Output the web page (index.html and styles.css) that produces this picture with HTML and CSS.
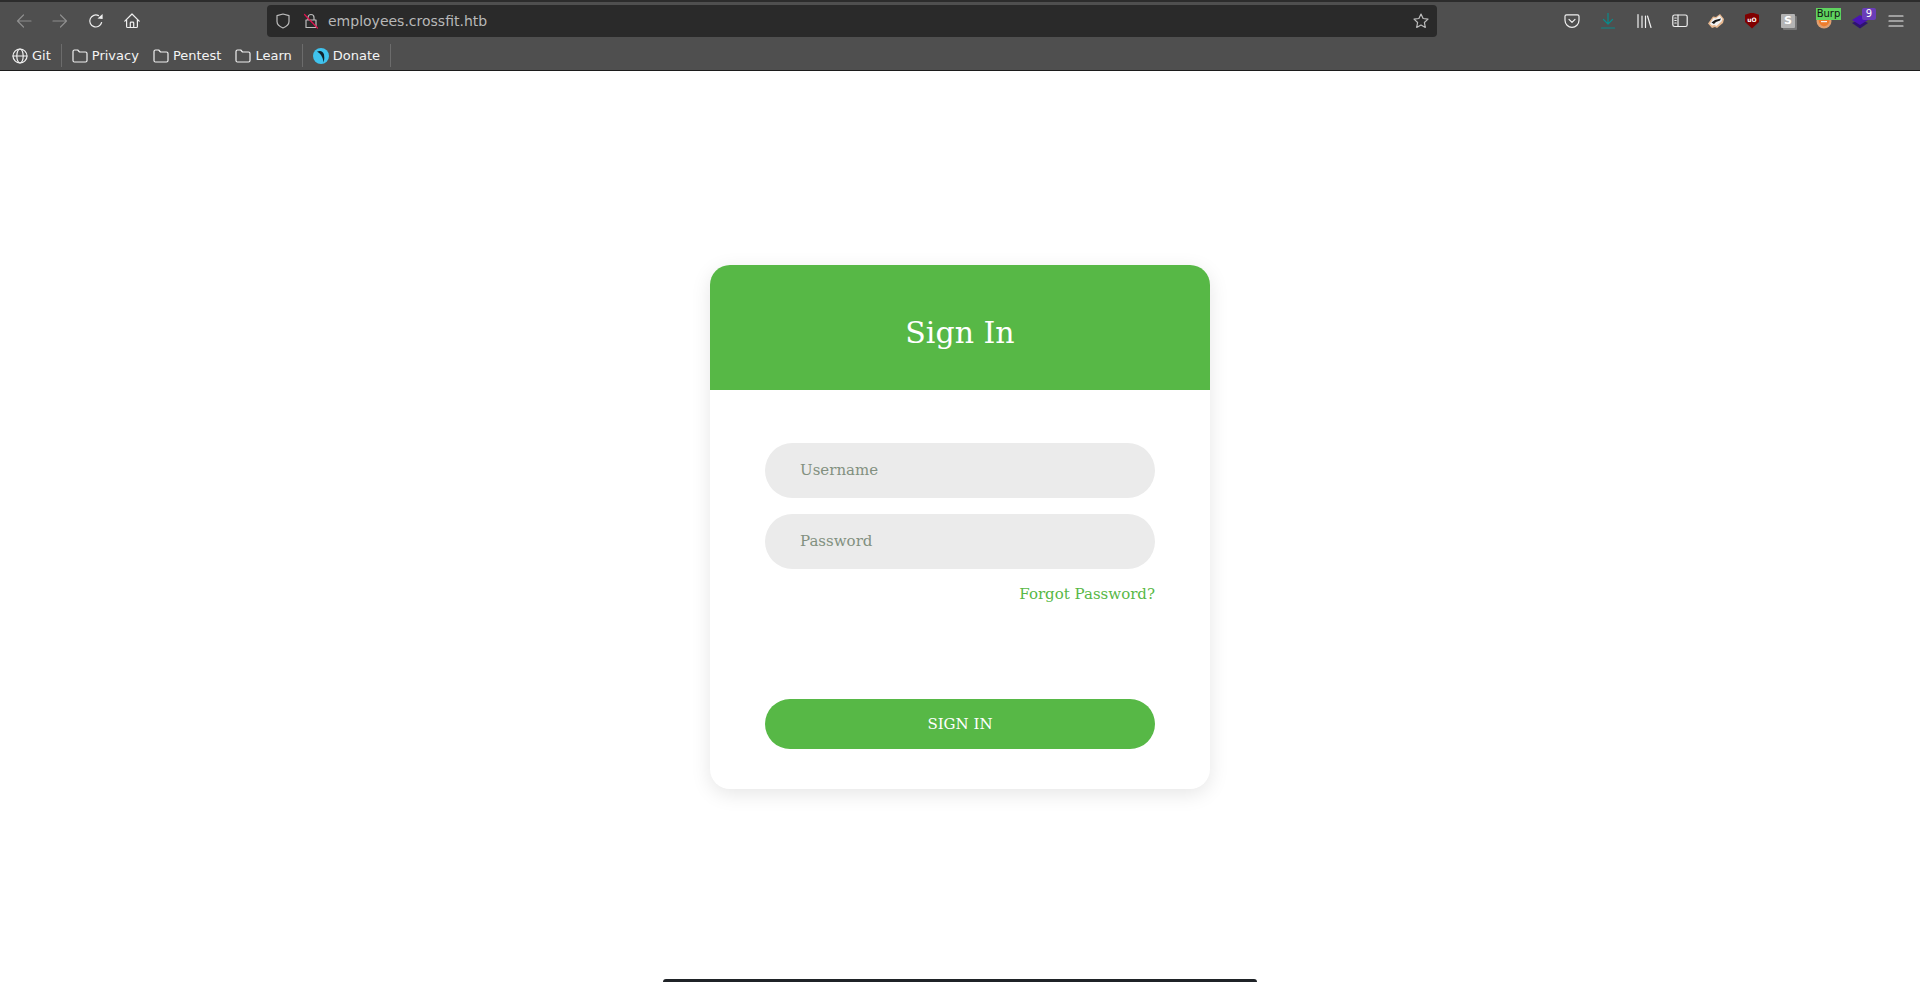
FILE: index.html
```html
<!DOCTYPE html>
<html lang="en">
<head>
    <meta charset="UTF-8">
    <title>employees.crossfit.htb</title>
    <link rel="stylesheet" href="styles.css">
</head>
<body>
    <header class="browser">
        <div class="nav-bar">
            <div class="tool-group">
                <span class="tool"><svg class="icon dim" viewBox="0 0 16 16"><path d="M15 8H1.500M7.500 2 1.500 8l6 6"/></svg></span>
                <span class="tool"><svg class="icon dim" viewBox="0 0 16 16"><path d="M1 8h13.500M8.500 2l6 6-6 6"/></svg></span>
                <span class="tool"><svg class="icon" viewBox="0 0 16 16"><path d="M13.600 9.500A6 6 0 1 1 10.500 2.600"/><path class="solid" d="M9.500 5.600 14.600 6V1z"/></svg></span>
                <span class="tool"><svg class="icon" viewBox="0 0 16 16"><path d="M.8 8.200 8 1l7.200 7.200M2.600 7v6.400q0 1.100 1.100 1.100h8.600q1.100 0 1.100-1.100V7M6.300 14.500V10q0-.8.8-.8h1.800q.8 0 .8.8v4.500"/></svg></span>
            </div>
            <div class="url-bar">
                <svg class="icon url-icon" viewBox="0 0 16 16"><path d="M8 1 2 2.600v6C2 11.800 5.400 14 8 15c2.600-1 6-3.200 6-6.400v-6z"/></svg>
                <svg class="icon url-icon lock" viewBox="0 0 16 16"><path d="M5 7V4.500a3 3 0 0 1 6 0V7M3 7h10v7.500H3z"/><path class="slash" d="M1.500 1.500 14.500 15"/></svg>
                <span class="url-text">employees.crossfit.htb</span>
                <svg class="icon url-icon star" viewBox="0 0 16 16"><path d="m8 1 2.100 4.500 4.900.6-3.600 3.400.9 4.900L8 12l-4.300 2.400.9-4.900L1 6.100l4.900-.6z"/></svg>
            </div>
            <div class="tool-group">
                <span class="tool"><svg class="icon" viewBox="0 0 16 16"><path d="M2.500 1.800h11q1.500 0 1.500 1.500v4A7 7 0 0 1 1 7.300v-4q0-1.500 1.500-1.500z"/><path d="m5 6.300 3 3 3-3"/></svg></span>
                <span class="tool"><svg class="icon teal" viewBox="0 0 16 16"><path d="M8 0v10.500M3.500 6.500 8 11l4.500-4.500M1.500 15h13"/></svg></span>
                <span class="tool"><svg class="icon" viewBox="0 0 16 16"><path d="M2 1.500v13M6 3v11.500M9.500 3v11.500M11.500 3l3.500 11.500"/></svg></span>
                <span class="tool"><svg class="icon" viewBox="0 0 16 16"><rect x=".8" y="2" width="14.400" height="11.500" rx="1.800"/><path d="M6 2v11.500M2.800 5h1.400M2.800 7.500h1.400M2.800 10h1.400"/></svg></span>
                <span class="tool"><svg class="ext" viewBox="0 0 16 16"><path fill="#e6b78f" d="M0 10.500 5 3.500 8 4l4-3 4 5-1 4-6 5-2-1-3 1z"/><path fill="#f2f2f2" d="M2 10.500 5.500 5 8 5.500l3.500-3 3 3.500-1 2.500-5 4.500-2-1-2.500.5z"/><path fill="#1a1a1a" d="M3.500 9.500 7 7l6-1.500-1 2-4 1.500-2 2z"/></svg></span>
                <span class="tool"><span class="ublock">uO</span></span>
                <span class="tool"><span class="stack-s">S</span></span>
                <span class="tool">
                    <svg class="ext" viewBox="0 0 16 16"><circle cx="8" cy="8" r="7.500" fill="#e0a070"/><path fill="#ee7d2c" d="M2.500 6h11q.5 6-5.500 7.500Q2.500 12 2.500 6z"/><path fill="#f5f5f5" d="M5 8h6v1.200H5z"/></svg>
                    <span class="badge badge-burp">Burp</span>
                </span>
                <span class="tool">
                    <svg class="ext" viewBox="0 0 16 16"><path fill="#2f1470" d="M0 10l8-4 8 4-8 5.500z"/><path fill="#4a14b4" d="M0 7l8-5 8 5-8 5z"/></svg>
                    <span class="badge badge-count">9</span>
                </span>
                <span class="tool"><svg class="icon" viewBox="0 0 16 16"><path d="M1 3h14M1 8h14M1 13h14"/></svg></span>
            </div>
        </div>
        <nav class="bookmarks">
            <a class="bookmark"><svg class="icon" viewBox="0 0 16 16"><circle cx="8" cy="8" r="7"/><ellipse cx="8" cy="8" rx="3.200" ry="7"/><path d="M1 8h14"/></svg>Git</a>
            <span class="divider"></span>
            <a class="bookmark"><svg class="icon" viewBox="0 0 16 16"><path d="M2.500 2h3.200l1.800 2h6q1.500 0 1.500 1.500v7q0 1.500-1.500 1.500h-11Q1 14 1 12.500v-9Q1 2 2.500 2z"/></svg>Privacy</a>
            <a class="bookmark"><svg class="icon" viewBox="0 0 16 16"><path d="M2.500 2h3.200l1.800 2h6q1.500 0 1.500 1.500v7q0 1.500-1.500 1.500h-11Q1 14 1 12.500v-9Q1 2 2.500 2z"/></svg>Pentest</a>
            <a class="bookmark"><svg class="icon" viewBox="0 0 16 16"><path d="M2.500 2h3.200l1.800 2h6q1.500 0 1.500 1.500v7q0 1.500-1.500 1.500h-11Q1 14 1 12.500v-9Q1 2 2.500 2z"/></svg>Learn</a>
            <span class="divider"></span>
            <a class="bookmark"><svg class="favicon" viewBox="0 0 16 16"><circle cx="8" cy="8" r="8" fill="#3fc3ee"/><path fill="#10222c" d="M4 3.500Q9.500 1.500 11 6.500q.8 3.500-.2 8-1-5-2.800-7.500Q6.800 5 4 3.500z"/></svg>Donate</a>
            <span class="divider"></span>
        </nav>
    </header>

    <main class="page">
        <form class="login-card">
            <div class="login-head">
                <h1>Sign In</h1>
            </div>
            <div class="login-body">
                <input class="field" type="text" name="username" placeholder="Username">
                <input class="field" type="password" name="password" placeholder="Password">
                <div class="forgot"><a href="#">Forgot Password?</a></div>
                <button class="submit" type="button">SIGN IN</button>
            </div>
        </form>
        <div class="bottom-bar"></div>
    </main>
</body>
</html>
```

FILE: styles.css
```css
* {
    box-sizing: border-box;
}
html, body {
    height: 100%;
}
body {
    margin: 0;
    display: flex;
    flex-direction: column;
    overflow: hidden;
    background-color: #fff;
    font-family: "DejaVu Serif", serif;
}

/* browser chrome */
.browser {
    height: 71px;
    flex: none;
    background-color: #4f4f4f;
    border-top: 2px solid #2c2c2c;
    border-bottom: 1px solid #1c1c1c;
    color: #f4f4f4;
    font-family: "DejaVu Sans", sans-serif;
    font-size: 13px;
}
.nav-bar {
    height: 34px;
    padding: 3px 6px 0;
    display: flex;
    align-items: center;
}
.tool-group {
    display: flex;
    flex: none;
}
.tool {
    position: relative;
    width: 36px;
    height: 32px;
    display: flex;
    align-items: center;
    justify-content: center;
}
.icon {
    width: 16px;
    height: 16px;
    flex: none;
    fill: none;
    stroke: #f0f0f0;
    stroke-width: 1.2;
    stroke-linecap: round;
    stroke-linejoin: round;
}
.icon .solid {
    fill: #f0f0f0;
    stroke: none;
}
.icon.dim {
    stroke: #8e8e8e;
}
.icon.teal {
    stroke: #0a8a8a;
}
.ext {
    width: 16px;
    height: 16px;
}
.url-bar {
    flex: 1;
    height: 32px;
    margin: 0 117px;
    padding: 0 8px 0 8px;
    display: flex;
    align-items: center;
    background-color: #2a2a2a;
    border-radius: 4px;
    color: #b8b8b8;
    font-size: 14px;
}
.url-icon {
    stroke: #bdbdbd;
    margin-right: 12px;
}
.url-icon.lock {
    margin-right: 9px;
}
.slash {
    stroke: #e0124f;
}
.url-text {
    flex: 1;
}
.url-icon.star {
    margin-right: 0;
    margin-left: 8px;
}
.ublock {
    width: 14px;
    height: 16px;
    background-color: #800000;
    clip-path: polygon(50% 0, 100% 14%, 100% 60%, 50% 100%, 0 60%, 0 14%);
    color: #fff;
    font-size: 6px;
    font-weight: bold;
    line-height: 14px;
    text-align: center;
}
.stack-s {
    width: 14px;
    height: 14px;
    background-color: #b4b4b4;
    box-shadow: 2px 2px 0 #777;
    border-radius: 1px;
    color: #fff;
    font-size: 11px;
    font-weight: bold;
    line-height: 14px;
    text-align: center;
}
.badge {
    position: absolute;
    top: 3px;
    height: 12px;
    font-size: 10px;
    line-height: 12px;
}
.badge-burp {
    left: 10px;
    width: 25px;
    background-color: #5fd35f;
    color: #111;
    text-align: center;
    white-space: nowrap;
}
.badge-count {
    left: 20px;
    width: 14px;
    background-color: #6a3db8;
    border-radius: 2px;
    color: #fff;
    text-align: center;
}
.bookmarks {
    height: 34px;
    padding: 5px 0 0 8px;
    display: flex;
    align-items: center;
}
.bookmark {
    padding: 0 4px;
    margin-right: 6px;
    display: flex;
    align-items: center;
    gap: 4px;
    white-space: nowrap;
}
.favicon {
    width: 16px;
    height: 16px;
}
.divider {
    width: 1px;
    height: 23px;
    margin: 0 6px 0 0;
    background-color: #6c6c6c;
}

/* login page */
.page {
    position: relative;
    flex: 1;
    display: flex;
    align-items: center;
    justify-content: center;
    overflow: hidden;
}
.login-card {
    width: 500px;
    background-color: #fff;
    border-radius: 20px;
    box-shadow: 0 5px 20px rgba(0, 0, 0, 0.1);
    overflow: hidden;
}
.login-head {
    height: 125px;
    padding-top: 49px;
    background-color: #57b846;
    text-align: center;
}
.login-head h1 {
    margin: 0;
    color: #fff;
    font-size: 30px;
    font-weight: normal;
    line-height: 38px;
}
.login-body {
    padding: 53px 55px 40px;
}
.field {
    display: block;
    width: 100%;
    height: 55px;
    margin-bottom: 16px;
    padding: 0 35px;
    border: none;
    border-radius: 28px;
    outline: none;
    background-color: #ebebeb;
    font-family: inherit;
    font-size: 15px;
}
.field::placeholder {
    color: #82907f;
    opacity: 1;
}
.forgot {
    height: 114px;
    text-align: right;
    font-size: 15px;
    line-height: 18px;
}
.forgot a {
    color: #57b846;
    text-decoration: none;
}
.submit {
    display: block;
    width: 100%;
    height: 50px;
    border: none;
    border-radius: 25px;
    background-color: #57b846;
    color: #fff;
    font-family: inherit;
    font-size: 15px;
}
.bottom-bar {
    position: absolute;
    left: 50%;
    bottom: 0;
    width: 594px;
    height: 3px;
    margin-left: -297px;
    border-radius: 8px 8px 0 0;
    background-color: #1f2327;
}
```
